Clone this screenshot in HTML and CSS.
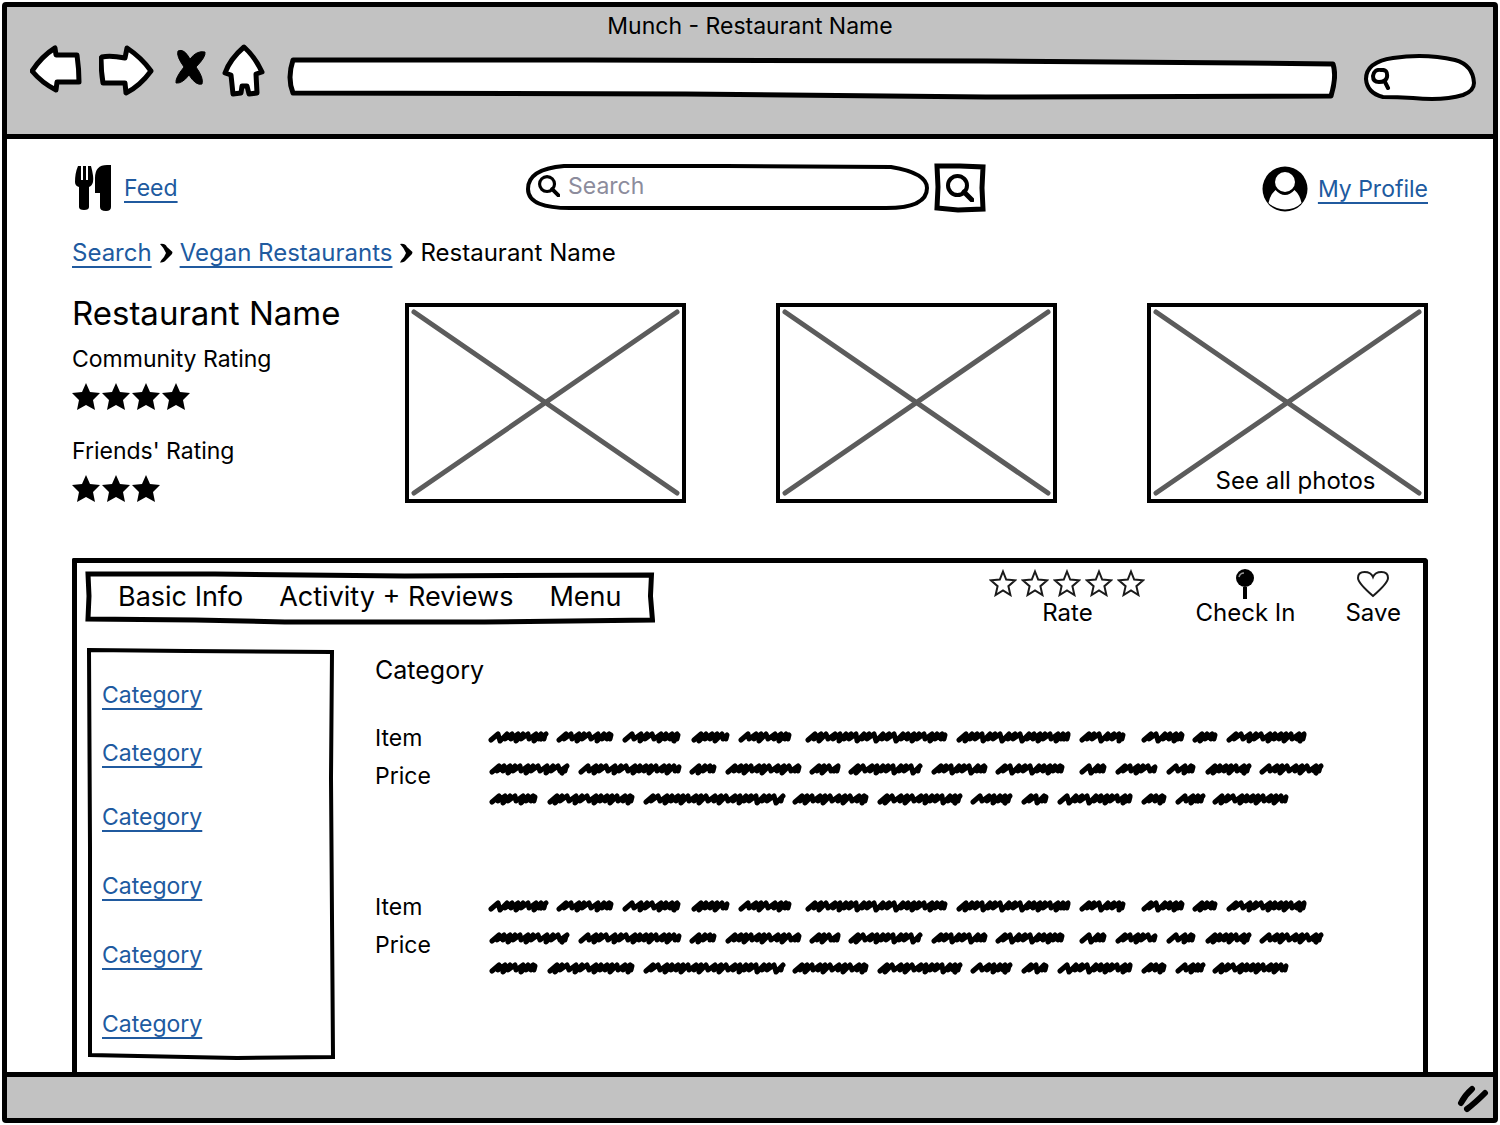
FILE: index.html
```html
<!DOCTYPE html>
<html lang="en">
<head>
<meta charset="utf-8">
<meta name="viewport" content="width=device-width, initial-scale=1">
<title>Munch - Restaurant Name</title>
<link rel="stylesheet" href="styles.css">
</head>
<body>
<svg class="defs" aria-hidden="true">
  <symbol id="star" viewBox="0 0 28 27"><path d="M14 0l4 9 10 1-7 7 2 10-9-5-9 5 2-10-7-7 10-1z"/></symbol>
  <symbol id="star-open" viewBox="0 0 28 28"><path d="M14 2.500l3.200 8 9 .8-6.800 5.900 2 8.800-7.400-4.600L6.600 26l2-8.800-6.800-5.900 9-.8z" fill="none" stroke="#1a1a1a" stroke-width="2"/></symbol>
  <symbol id="lens" viewBox="0 0 28 28"><circle cx="11.500" cy="11.500" r="9.500" fill="none" stroke="#000" stroke-width="4"/><path d="M18 18l8 8" stroke="#000" stroke-width="5" stroke-linecap="round"/></symbol>
  <symbol id="chevron" viewBox="0 0 14 20"><path d="M1 1Q6 0 8 4L13.500 9 13 11 8 16Q5 20 1 19.500 2 17 5 14L7 10Q5 5 1 1z"/></symbol>
</svg>
<div class="window">
  <header class="chrome">
    <div class="chrome-title">Munch - Restaurant Name</div>
    <div class="toolbar">
      <button class="tool" aria-label="Back"><svg width="53" height="60" viewBox="30 41 53 60"><path d="M32 70Q42 55 55 47L56 54 77 54Q79 68 79 81L57 81 56 89Q42 82 32 70z"/></svg></button>
      <button class="tool" aria-label="Forward"><svg width="56" height="60" viewBox="99 41 56 60"><path d="M102 56Q110 54 125 57L127 47Q142 57 151 70 140 85 126 92L125 82 103 82Q101 70 101 57z"/></svg></button>
      <button class="tool" aria-label="Stop"><svg width="35" height="60" viewBox="171 41 35 60"><path class="ink" d="M178 50Q184 47 190 58 197 49 205 51 206 56 196 66 204 77 202 83 196 85 189 74 182 83 176 82 175 77 184 66 176 55 178 50z"/></svg></button>
      <button class="tool" aria-label="Home"><svg width="48" height="60" viewBox="222 41 48 60"><path d="M244 46Q255 56 262 71L256 73 257 92 249 93 247 85 242 85 241 92 233 93 231 74 225 72Q230 58 244 46z"/></svg></button>
      <input class="address" type="text" aria-label="Address">
      <label class="quick-search"><svg width="20" height="22" viewBox="0 0 20 22"><path d="M2 8Q3 1 10 2 17 1 16 9 15 14 8 14 2 14 2 8zM14 14L17 20" fill="none" stroke="#000" stroke-width="4" stroke-linecap="round"/></svg><input type="search" aria-label="Web search"></label>
    </div>
  </header>

  <main class="page">
    <div class="topbar">
      <a class="brand" href="#feed">
        <svg width="42" height="46" viewBox="0 0 42 46"><path d="M4 1h3v14h2V1h3v14h2V1h3q3 11 2 16-1 4-4 5v20q0 3-5 3t-5-3V22q-4-1-4-5Q1 8 4 1zM37 0v42q0 4-5 4-6 0-6-4V28h-5V13Q21 0 33 0z" transform="translate(2 0)"/></svg>
        <span class="link">Feed</span>
      </a>
      <form class="search" role="search">
        <label class="search-field"><svg width="22" height="22"><use href="#lens"/></svg><input type="search" placeholder="Search" aria-label="Search"></label>
        <button class="search-button" type="button" aria-label="Go"><svg width="28" height="28"><use href="#lens"/></svg></button>
      </form>
      <a class="profile" href="#profile">
        <svg width="46" height="46" viewBox="0 0 46 46"><circle cx="23" cy="23" r="22.500"/><circle cx="23" cy="16" r="10" fill="#fff"/><path d="M13.500 24Q18 29 23 29t9.500-5Q38 29 39.500 37 33 43.500 23 43.500T6.500 37Q8 29 13.500 24z" fill="#fff"/></svg>
        <span class="link">My Profile</span>
      </a>
    </div>

    <nav class="crumbs" aria-label="Breadcrumb">
      <a class="link" href="#search">Search</a>
      <svg width="14" height="20"><use href="#chevron"/></svg>
      <a class="link" href="#vegan">Vegan Restaurants</a>
      <svg width="14" height="20"><use href="#chevron"/></svg>
      <span>Restaurant Name</span>
    </nav>

    <section class="summary">
      <div class="ratings">
        <h1>Restaurant Name</h1>
        <h2>Community Rating</h2>
        <div class="stars" role="img" aria-label="4 stars"><svg><use href="#star"/></svg><svg><use href="#star"/></svg><svg><use href="#star"/></svg><svg><use href="#star"/></svg></div>
        <h2>Friends' Rating</h2>
        <div class="stars" role="img" aria-label="3 stars"><svg><use href="#star"/></svg><svg><use href="#star"/></svg><svg><use href="#star"/></svg></div>
      </div>
      <div class="photos">
        <div class="photo"></div>
        <div class="photo"></div>
        <a class="photo" href="#photos">See all photos</a>
      </div>
    </section>

    <section class="panel">
      <div class="panel-head">
        <nav class="tabs" aria-label="Sections">
          <a href="#info">Basic Info</a>
          <a href="#activity">Activity + Reviews</a>
          <a href="#menu">Menu</a>
        </nav>
        <div class="actions">
          <button><span class="rate"><svg><use href="#star-open"/></svg><svg><use href="#star-open"/></svg><svg><use href="#star-open"/></svg><svg><use href="#star-open"/></svg><svg><use href="#star-open"/></svg></span>Rate</button>
          <button><svg width="20" height="32" viewBox="0 0 20 32"><circle cx="10" cy="9" r="9"/><path d="M8 18h4v12H8z"/><path d="M4 8q1-4 5-4" fill="none" stroke="#999" stroke-width="1.500"/></svg>Check In</button>
          <button><svg width="32" height="32" viewBox="0 0 32 32"><path d="M16 27Q1 14 1 9 1 3 7.500 3 14 3 16 8 18 3 24.500 3 31 3 31 9 31 14 16 27z" fill="none" stroke="#1a1a1a" stroke-width="2"/></svg>Save</button>
        </div>
      </div>
      <div class="panel-body">
        <nav class="categories" aria-label="Categories">
          <ul>
            <li><a class="link" href="#c1">Category</a></li>
            <li><a class="link" href="#c2">Category</a></li>
            <li><a class="link" href="#c3">Category</a></li>
            <li><a class="link" href="#c4">Category</a></li>
            <li><a class="link" href="#c5">Category</a></li>
            <li><a class="link" href="#c6">Category</a></li>
          </ul>
        </nav>
        <div class="menu">
          <h2>Category</h2>
          <article class="item">
            <div><h3>Item</h3><p>Price</p></div>
            <svg class="scribble" viewBox="0 0 840 90" role="img" aria-label="Description"></svg>
          </article>
          <article class="item">
            <div><h3>Item</h3><p>Price</p></div>
            <svg class="scribble" viewBox="0 0 840 90" role="img" aria-label="Description"></svg>
          </article>
        </div>
      </div>
    </section>
  </main>

  <footer class="status">
    <svg width="34" height="28" viewBox="0 0 34 28"><path d="M5 18Q9 10 16 4M11 24Q19 18 29 8" fill="none" stroke="#000" stroke-width="6" stroke-linecap="round"/></svg>
  </footer>
</div>
<script src="script.js"></script>
</body>
</html>
```

FILE: styles.css
```css
:root {
  --ink: #000;
  --grey: #c2c2c2;
  --link: #205a9f;
}

* { box-sizing: border-box; }

body {
  margin: 0;
  padding: 2px;
  background: #fff;
  color: var(--ink);
  font: 23px/32px Inter, "Liberation Sans", sans-serif;
}

h1, h2, h3, p, ul { margin: 0; padding: 0; font-weight: 400; font-size: 23px; line-height: 32px; }
ul { list-style: none; }
button { padding: 0; border: 0; background: none; font: inherit; color: inherit; }
input { border: 0; padding: 0; background: none; font: inherit; color: inherit; min-width: 0; outline: 0; }
a { color: inherit; text-decoration: none; }
svg { display: block; flex: none; }

.defs { display: none; }

.link {
  color: var(--link);
  text-decoration: underline 2px;
  text-underline-offset: 5px;
  text-decoration-skip-ink: none;
}

.window {
  display: flex;
  flex-direction: column;
  min-height: calc(100vh - 4px);
  border: 5px solid var(--ink);
  border-radius: 4px;
}

/* Browser chrome */
.chrome {
  padding-bottom: 32px;
  background: var(--grey);
  border-bottom: 5px solid var(--ink);
}
.chrome-title { padding-top: 3px; text-align: center; }
.toolbar {
  display: flex;
  align-items: center;
  gap: 16px;
  height: 60px;
  padding: 0 16px 0 23px;
}
.tool path { fill: #fff; stroke: var(--ink); stroke-width: 5; stroke-linejoin: round; }
.tool .ink { fill: var(--ink); stroke-width: 1; }
.address {
  flex: 1;
  height: 44px;
  margin-top: 12px;
  padding: 0 16px;
  background: url("data:image/svg+xml,%3Csvg xmlns='http://www.w3.org/2000/svg' viewBox='0 0 1051 44' preserveAspectRatio='none'%3E%3Cpath d='M7 4L300 4 700 5 960 7 1047 8Q1051 20 1045 40L700 41 400 38 7 37Q1 22 7 4z' fill='%23fff' stroke='%23000' stroke-width='5' stroke-linejoin='round'/%3E%3C/svg%3E") 0 0 / 100% 100% no-repeat;
}
.quick-search {
  display: flex;
  align-items: center;
  width: 114px;
  height: 48px;
  margin: 10px 0 0 10px;
  padding: 4px 0 0 8px;
  background: url("data:image/svg+xml,%3Csvg xmlns='http://www.w3.org/2000/svg' viewBox='0 0 114 48' preserveAspectRatio='none'%3E%3Cpath d='M3 26Q3 9 30 5 62 0 92 7 110 12 111 30 111 38 100 42 80 48 50 45 34 44 20 44 4 40 3 26z' fill='%23fff' stroke='%23000' stroke-width='4'/%3E%3C/svg%3E") 0 0 / 100% 100% no-repeat;
}
.quick-search input { width: 70px; }

/* Page */
.page {
  display: flex;
  flex: 1;
  flex-direction: column;
  padding: 24px 65px 0;
}
.topbar {
  display: grid;
  grid-template-columns: 1fr auto 1fr;
  align-items: center;
  height: 50px;
}
.brand, .profile { display: flex; align-items: center; gap: 10px; }
.profile { justify-self: end; padding-top: 2px; }
.search { display: flex; align-items: center; gap: 4px; margin-left: 12px; }
.search-field {
  display: flex;
  align-items: center;
  gap: 8px;
  width: 404px;
  height: 48px;
  padding: 0 24px 4px 12px;
  background: url("data:image/svg+xml,%3Csvg xmlns='http://www.w3.org/2000/svg' viewBox='0 0 404 48' preserveAspectRatio='none'%3E%3Cpath d='M38 2L200 2 365 3Q401 9 401 24 401 44 360 44L48 44Q2 45 2 25 2 5 38 2z' fill='%23fff' stroke='%23000' stroke-width='4'/%3E%3C/svg%3E") 0 0 / 100% 100% no-repeat;
}
.search-field input { flex: 1; }
.search-field input::placeholder { color: #8c8c9c; opacity: 1; }
.search-button {
  display: grid;
  place-items: center;
  width: 52px;
  height: 50px;
  background: url("data:image/svg+xml,%3Csvg xmlns='http://www.w3.org/2000/svg' viewBox='0 0 52 50' preserveAspectRatio='none'%3E%3Cpath d='M3 3L26 3 49 4 48 25 49 46 24 47 3 45 4 24z' fill='%23fff' stroke='%23000' stroke-width='5'/%3E%3C/svg%3E") 0 0 / 100% 100% no-repeat;
}

.crumbs { display: flex; align-items: center; gap: 7px; margin-top: 24px; font-size: 24px; }

.summary {
  display: grid;
  grid-template-columns: 280px 1fr;
  column-gap: 53px;
  margin-top: 34px;
}
.ratings h1 { font-size: 33px; line-height: 20px; margin-bottom: 20px; white-space: nowrap; }
.stars { display: flex; gap: 2px; height: 32px; margin: 8px 0 20px; }
.stars svg { width: 28px; height: 27px; }
.ratings .stars:last-child { margin-bottom: 0; }
.photos { display: grid; grid-template-columns: repeat(3, 1fr); gap: 90px; height: 200px; }
.photo {
  display: flex;
  align-items: flex-end;
  justify-content: center;
  padding: 0 0 2px 16px;
  border: 4px solid var(--ink);
  font-size: 24px;
  background: url("data:image/svg+xml,%3Csvg xmlns='http://www.w3.org/2000/svg' viewBox='0 0 273 192' preserveAspectRatio='none'%3E%3Cpath d='M5 5L268 186M268 5L5 186' stroke='%235c5c5c' stroke-width='5' stroke-linecap='round'/%3E%3C/svg%3E") 0 0 / 100% 100% no-repeat;
}

/* Restaurant panel */
.panel {
  flex: 1;
  margin-top: 51px;
  padding: 8px 8px 12px;
  border: 5px solid var(--ink);
  border-bottom: 0;
  border-radius: 2px 4px 0 0;
}
.panel-head { display: flex; justify-content: space-between; }
.tabs {
  display: flex;
  align-items: center;
  gap: 36px;
  height: 54px;
  padding: 0 33px 2px;
  font-size: 27px;
  background: url("data:image/svg+xml,%3Csvg xmlns='http://www.w3.org/2000/svg' viewBox='0 0 571 54' preserveAspectRatio='none'%3E%3Cpath d='M3 3L130 3 320 5 567 4 566 25 568 49 400 51 200 51 110 49 3 48 4 25z' fill='%23fff' stroke='%23000' stroke-width='5'/%3E%3C/svg%3E") 0 0 / 100% 100% no-repeat;
}
.actions { display: flex; gap: 50px; padding-right: 14px; font-size: 24px; }
.actions button { display: flex; flex-direction: column; align-items: center; height: 56px; margin-top: -2px; line-height: 24px; }
.rate { display: flex; gap: 4px; height: 32px; }
.rate svg { width: 28px; height: 28px; }

.panel-body { display: grid; grid-template-columns: 248px 1fr; column-gap: 40px; margin-top: 23px; padding-left: 2px; }
.categories {
  height: 412px;
  padding: 31px 15px;
  background: url("data:image/svg+xml,%3Csvg xmlns='http://www.w3.org/2000/svg' viewBox='0 0 248 412' preserveAspectRatio='none'%3E%3Cpath d='M2 2L100 3 245 4 244 130 245 270 246 409 150 410 100 409 3 407 3 200z' fill='%23fff' stroke='%23000' stroke-width='4'/%3E%3C/svg%3E") 0 0 / 100% 100% no-repeat;
}
.categories li { height: 69px; }
.categories li:nth-child(1) { height: 58px; }
.categories li:nth-child(2) { height: 64px; }
.menu h2 { margin: 6px 0 36px; font-size: 25px; }
.item { display: grid; grid-template-columns: 113px 1fr; height: 169px; }
.item h3 { margin-bottom: 6px; }
.scribble { width: 840px; height: 90px; }

.status {
  display: flex;
  align-items: center;
  justify-content: flex-end;
  height: 46px;
  padding: 3px 3px 0 0;
  border-top: 5px solid var(--ink);
  background: var(--grey);
}
```

FILE: script.js
```js
// Placeholder copy: each line lists the start and end of its scribbled words.
const lines = [
  [15, [[0,60],[68,126],[134,193],[203,242],[250,304],[317,460],[468,583],[591,638],[653,697],[704,730],[738,819]]],
  [47, [[1,81],[90,194],[201,229],[237,314],[321,353],[360,434],[443,500],[507,577],[591,619],[627,670],[678,708],[717,763],[771,835]]],
  [77, [[1,50],[59,147],[155,297],[304,381],[389,474],[482,524],[533,561],[569,645],[653,679],[687,717],[724,801]]]
];

const steps = [9, 5, 6, 5, 5, 8, 5, 5, 9, 6, 5];

function word(start, end, y, seed) {
  let x = start + 3;
  let d = `M${x} ${y + 3}`;
  for (let i = seed; x < end - 8; i++) {
    const step = Math.min(steps[i % steps.length], end - 7 - x);
    const low = i % 3 === 0 ? 4 : 2;
    d += `L${x + 7} ${y - 3}L${x + step} ${y + low}`;
    x += step;
  }
  return d + `L${end - 3} ${y - 2}L${end - 4} ${y + 2}`;
}

const path = lines
  .map(([y, words], row) => words.map(([a, b], i) => word(a, b, y, i * 4 + row)).join(""))
  .join("");

document.querySelectorAll(".scribble").forEach((svg) => {
  svg.innerHTML = `<path d="${path}" fill="none" stroke="#000" stroke-width="5" stroke-linecap="round" stroke-linejoin="round"/>`;
});
```
